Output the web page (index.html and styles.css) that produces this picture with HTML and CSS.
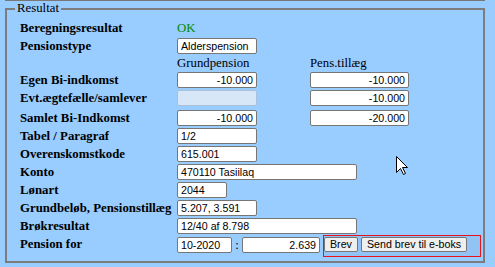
FILE: index.html
```html
<!DOCTYPE html>
<html lang="da">
<head>
<meta charset="utf-8">
<title>Resultat</title>
<link rel="stylesheet" href="styles.css">
</head>
<body>
<div class="topline"></div>
<fieldset class="result">
  <legend>Resultat</legend>
  <div class="grid">
    <div class="lbl">Beregningsresultat</div>
    <div class="cell ok">OK</div>
    <div class="cell"></div>

    <div class="lbl">Pensionstype</div>
    <div class="cell"><input class="in w80" type="text" value="Alderspension" readonly></div>
    <div class="cell"></div>

    <div class="lbl head"></div>
    <div class="cell head">Grundpension</div>
    <div class="cell head">Pens.tillæg</div>

    <div class="lbl">Egen Bi-indkomst</div>
    <div class="cell"><input class="in w80 num" type="text" value="-10.000" readonly></div>
    <div class="cell"><input class="in w99 num" type="text" value="-10.000" readonly></div>

    <div class="lbl">Evt.ægtefælle/samlever</div>
    <div class="cell"><input class="in w80 off" type="text" value="" disabled></div>
    <div class="cell"><input class="in w99 num" type="text" value="-10.000" readonly></div>

    <div class="lbl">Samlet Bi-Indkomst</div>
    <div class="cell"><input class="in w80 num" type="text" value="-10.000" readonly></div>
    <div class="cell"><input class="in w99 num" type="text" value="-20.000" readonly></div>

    <div class="lbl">Tabel / Paragraf</div>
    <div class="cell wide"><input class="in w80" type="text" value="1/2" readonly></div>

    <div class="lbl">Overenskomstkode</div>
    <div class="cell wide"><input class="in w80" type="text" value="615.001" readonly></div>

    <div class="lbl">Konto</div>
    <div class="cell wide"><input class="in w180" type="text" value="470110 Tasiilaq" readonly></div>

    <div class="lbl">Lønart</div>
    <div class="cell wide"><input class="in w50" type="text" value="2044" readonly></div>

    <div class="lbl">Grundbeløb, Pensionstillæg</div>
    <div class="cell wide"><input class="in w80" type="text" value="5.207, 3.591" readonly></div>

    <div class="lbl">Brøkresultat</div>
    <div class="cell wide"><input class="in w180" type="text" value="12/40 af 8.798" readonly></div>

    <div class="lbl">Pension for</div>
    <div class="cell wide pension">
      <input class="in w55 mt" type="text" value="10-2020" readonly>
      <span class="colon">:</span>
      <input class="in w78 num mt" type="text" value="2.639" readonly>
      <div class="actions">
        <button class="btn" type="button">Brev</button>
        <button class="btn" type="button">Send brev til e-boks</button>
      </div>
    </div>
  </div>
</fieldset>
<svg class="cursor" width="13" height="20" viewBox="0 0 13 20" aria-hidden="true">
  <polygon points="0.5,0.5 0.5,16.5 4.5,12.5 7.5,18.5 9.5,17.5 6.5,11.5 11.5,11.5" fill="#fff" stroke="#000" stroke-width="1" stroke-linejoin="miter"/>
</svg>
</body>
</html>
```
FILE: styles.css
```css
html, body {
  margin: 0;
  padding: 0;
}
body {
  background: #99ccff;
  font-family: "Liberation Serif", "Times New Roman", serif;
  font-size: 12.8px;
  color: #000;
  position: relative;
  width: 495px;
  height: 267px;
  overflow: hidden;
}
.topline {
  margin-left: 5px;
  width: 480px;
  height: 1px;
  background: #777;
}
.result {
  margin: 0 0 0 5px;
  width: 480px;
  box-sizing: border-box;
  border: 2px solid #7c7c7c;
  padding: 0 0 8px 8px;
  min-width: 0;
}
.result legend {
  padding: 0 2px;
  font-size: 12.8px;
  line-height: 15px;
}
.grid {
  margin: 3px 0 0 5px;
  display: grid;
  grid-template-columns: 157px 133px 1fr;
  grid-template-rows: 18px 18px 16px 18px 18px 20px repeat(7, 18px);
  align-items: end;
}
.lbl {
  font-weight: bold;
  height: 18px;
  line-height: 18px;
  white-space: nowrap;
}
.cell {
  height: 18px;
  display: flex;
  align-items: center;
}
.lbl.head, .cell.head {
  height: 16px;
  line-height: 16px;
}
.wide {
  grid-column: 2 / 4;
}
.ok {
  color: #008a00;
}
.in {
  box-sizing: border-box;
  height: 16px;
  margin: 0;
  padding: 0 3px 0 3px;
  border: 1px solid #767676;
  border-radius: 2px;
  background: #fff;
  font-family: "Liberation Sans", Arial, sans-serif;
  font-size: 10.67px;
  color: #000;
  outline: none;
}
.num { text-align: right; }
.off {
  background: #d7e7f8;
  border-color: #a9c2dc;
}
.w50 { width: 50px; }
.w55 { width: 55px; }
.w78 { width: 78px; }
.w80 { width: 80px; }
.w99 { width: 99px; }
.w180 { width: 180px; }
.pension {
  align-items: flex-start;
  overflow: visible;
}
.mt { margin-top: 2px; }
.colon {
  width: 10px;
  text-align: center;
  line-height: 18px;
  margin-top: 1px;
}
.actions {
  margin-left: 3px;
  box-sizing: border-box;
  width: 158px;
  height: 22px;
  border: 1px solid #e8141b;
  background: rgba(60, 80, 110, 0.07);
  display: flex;
  align-items: flex-start;
  gap: 3px;
  padding-top: 1px;
}
.btn {
  box-sizing: border-box;
  height: 15px;
  margin: 0;
  padding: 0 5px;
  border: 1px solid #767676;
  border-radius: 2px;
  background: #efefef;
  font-family: "Liberation Sans", Arial, sans-serif;
  font-size: 10.67px;
  line-height: 13px;
  color: #000;
}
.cursor {
  position: absolute;
  left: 396px;
  top: 156px;
}
```
